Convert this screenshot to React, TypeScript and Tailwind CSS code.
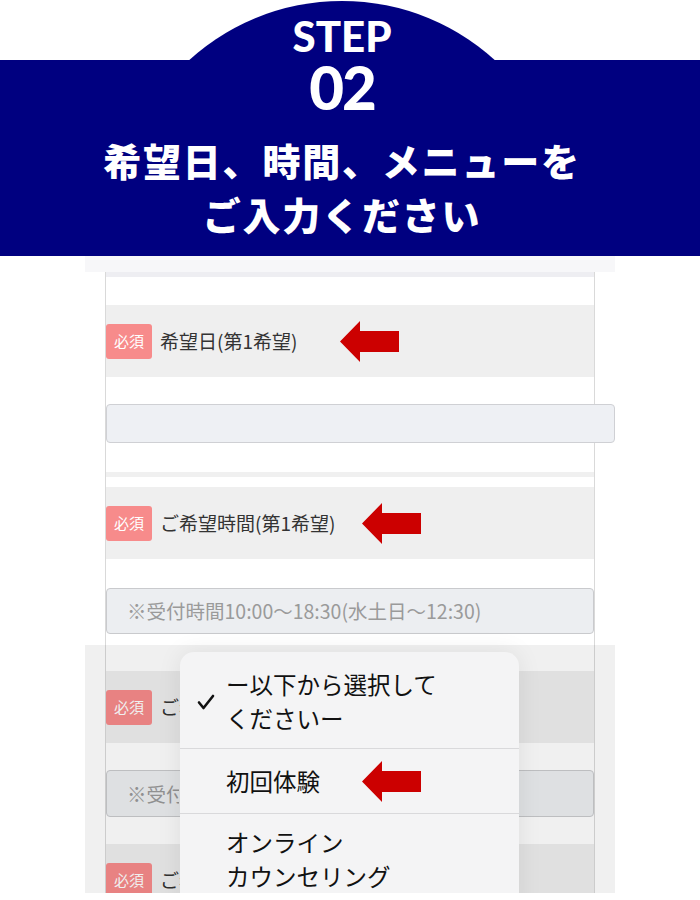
const jp = "font-['Noto_Sans_CJK_JP',sans-serif]";

function RedArrow({ className = "" }: { className?: string }) {
  return (
    <svg width="60" height="41" viewBox="0 0 60 41" className={`shrink-0 ${className}`}>
      <path d="M0 20.5L20 0V10H59V31H20V41Z" fill="#cc0000" />
    </svg>
  );
}

function Badge() {
  return (
    <span className="flex h-[35px] w-[46px] shrink-0 items-center justify-center rounded-[3px] bg-[#f78b8b] text-[15px] text-white">
      必須
    </span>
  );
}

// label is clipped where the picker covers it
function FieldHead({ label, arrowGap, clip }: { label: string; arrowGap?: string; clip?: boolean }) {
  return (
    <div className="flex h-[72px] items-center bg-[#efefef]">
      <Badge />
      <span
        className={`ml-2 whitespace-nowrap text-[19px] text-[#333] ${clip ? "w-[20px] overflow-hidden" : ""}`}
      >
        {label}
      </span>
      {arrowGap && <RedArrow className={arrowGap} />}
    </div>
  );
}

function Check() {
  return (
    <svg width="18" height="16" viewBox="0 0 18 16" fill="none">
      <path d="M2 8.5L6.5 14L16 2" stroke="#111" strokeWidth="2.6" strokeLinecap="round" strokeLinejoin="round" />
    </svg>
  );
}

export default function App() {
  return (
    <div className={`w-[700px] bg-white ${jp}`}>
      {/* step header */}
      <div className="relative h-[256px] overflow-hidden">
        <div className="absolute left-[115px] top-[1px] h-[454px] w-[454px] rounded-full bg-[#000080]" />
        <div className="absolute inset-x-0 top-[60px] bottom-0 bg-[#000080]" />
        <div className="relative flex flex-col items-center pr-4 text-white">
          <p className="mt-[15px] font-['Lato',sans-serif] text-[42px] font-black leading-none">STEP</p>
          <p className="font-['Lato',sans-serif] text-[60px] font-black leading-none tracking-[-2px]">02</p>
          <h1 className="mt-4 text-center text-[38px] font-black leading-[54px] tracking-[1.8px]">
            希望日、時間、メニューを
            <br />
            ご入力ください
          </h1>
        </div>
      </div>

      {/* form screenshot */}
      <div className="relative h-[637px] overflow-hidden">
        <div className="ml-[85px] h-[16px] w-[530px] bg-[#f7f7f9]" />
        <div className="ml-[105px] w-[490px] border-x border-[#d9d9d9]">
          <div className="h-[5px] bg-[#eeeef2]" />
          <div className="h-[28px]" />
          <FieldHead label="希望日(第1希望)" arrowGap="ml-[43px]" />
          <div className="mt-[27px] h-[39px] w-[509px] rounded-[4px] border border-[#cfd0d4] bg-[#eef0f4]" />
          <div className="mt-[29px] h-[5px] bg-[#f0f0f0]" />
          <div className="h-[10px]" />
          <FieldHead label="ご希望時間(第1希望)" arrowGap="ml-[27px]" />
          <div className="mt-[29px] flex h-[46px] items-center rounded-[4px] border border-[#c9cacd] bg-[#eceef1] pl-5 text-[19.5px] text-[#9a9a9a]">
            ※受付時間10:00〜18:30(水土日〜12:30)
          </div>
          <div className="h-[37px]" />
          <FieldHead label="ご希望メニュー" clip />
          <div className="mt-[27px] flex h-[47px] items-center rounded-[4px] border border-[#c9cacd] bg-[#eceef1] pl-5 text-[19.5px] text-[#9a9a9a]">
            <span className="w-[52px] overflow-hidden whitespace-nowrap">※受付時間</span>
          </div>
          <div className="h-[27px]" />
          <FieldHead label="ご希望日(第2希望)" clip />
        </div>

        {/* dimmed backdrop of the picker */}
        <div className="absolute left-[85px] top-[389px] bottom-0 w-[530px] bg-black/[0.06]" />

        {/* select picker */}
        <div className="absolute left-[180px] top-[396px] h-[260px] w-[339px] rounded-t-[14px] bg-[#f4f4f5] text-[23.5px] leading-[34px] text-[#111] shadow-[0_0_24px_rgba(0,0,0,0.08)]">
          <div className="relative h-[96px] pl-[46px] pt-[15px]">
            <span className="absolute left-[17px] top-[42px]">
              <Check />
            </span>
            ー以下から選択して
            <br />
            くださいー
          </div>
          <div className="h-px bg-[#d9d9db]" />
          <div className="flex h-[64px] items-center pl-[46px]">
            初回体験
            <RedArrow className="ml-[42px]" />
          </div>
          <div className="h-px bg-[#d9d9db]" />
          <div className="pl-[46px] pt-[11px]">
            オンライン
            <br />
            カウンセリング
          </div>
        </div>
      </div>
      <div className="h-[7px]" />
    </div>
  );
}
